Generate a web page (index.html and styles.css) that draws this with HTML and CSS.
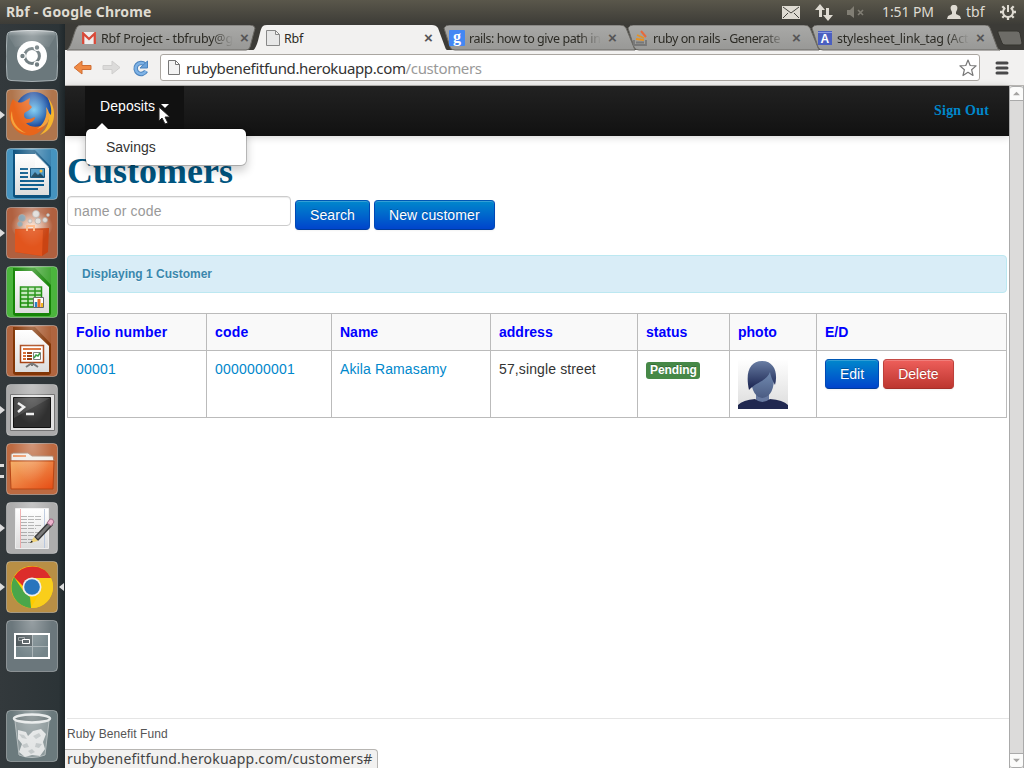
FILE: index.html
```html
<!DOCTYPE html>
<html lang="en">
<head>
<meta charset="utf-8">
<title>Rbf</title>
<link rel="stylesheet" href="styles.css">
</head>
<body>
<svg class="defs" width="0" height="0">
  <defs>
    <linearGradient id="gloss" x1="0" y1="0" x2="0" y2="1"><stop offset="0" stop-color="#fff" stop-opacity=".45"/><stop offset=".35" stop-color="#fff" stop-opacity=".08"/><stop offset="1" stop-color="#fff" stop-opacity=".06"/></linearGradient>
    <linearGradient id="tabg" x1="0" y1="0" x2="0" y2="1"><stop offset="0" stop-color="#a9a9a7"/><stop offset="1" stop-color="#989896"/></linearGradient>
    <linearGradient id="paper" x1="0" y1="0" x2="0" y2="1"><stop offset="0" stop-color="#fff"/><stop offset="1" stop-color="#dcdcdc"/></linearGradient>
    <linearGradient id="orange" x1="0" y1="0" x2="1" y2="1"><stop offset="0" stop-color="#f5b26b"/><stop offset="1" stop-color="#e64b13"/></linearGradient>
    <radialGradient id="globe"><stop offset="0" stop-color="#6fc7f2"/><stop offset="1" stop-color="#133f96"/></radialGradient>
    <radialGradient id="burst" cx=".5" cy=".55" r=".5"><stop offset="0" stop-color="#ffe9da"/><stop offset="1" stop-color="#ffe9da" stop-opacity="0"/></radialGradient>
    <linearGradient id="face" x1="0" y1="0" x2="0" y2="1"><stop offset="0" stop-color="#7c97bd"/><stop offset="1" stop-color="#4b5c83"/></linearGradient>
    <linearGradient id="hair" x1="0" y1="0" x2="0" y2="1"><stop offset="0" stop-color="#687da3"/><stop offset="1" stop-color="#17204d"/></linearGradient>
  </defs>
</svg>
<header class="panel">
  <span class="panel-title">Rbf - Google Chrome</span>
  <div class="indicators">
    <svg class="mail" width="18" height="13" viewBox="0 0 18 13"><path fill="#dfdbd2" d="M0 0h18v13H0z"/><path fill="none" stroke="#45443f" d="m1 1 8 6 8-6M1 12l5-5m11 5-5-5"/></svg>
    <svg class="net" width="18" height="17" viewBox="0 0 18 17"><path fill="#dfdbd2" d="m5 0 5 6H7v7H4V6H0zm8 17-5-6h3V4h3v7h4z"/></svg>
    <svg class="vol" width="18" height="13" viewBox="0 0 18 13"><path fill="#817e74" d="M0 4h3l4-4v12L3 9H0z"/><path stroke="#817e74" stroke-width="1.600" d="m11 4 5 5m0-5-5 5"/></svg>
    <span class="clock">1:51 PM</span>
    <svg class="person" width="14" height="14" viewBox="0 0 14 14"><path fill="#dfdbd2" d="M7 0c3 0 4 2 3 5L9 7v2l4 2 1 3H0l1-3 4-2V7L4 5C3 2 4 0 7 0z"/></svg>
    <span class="user">tbf</span>
    <svg class="gear" width="16" height="16" viewBox="0 0 16 16"><g fill="none" stroke="#dfdbd2"><path stroke-width="2" d="M5.300 3.800a5 5 0 1 0 5.400 0M8 1v7"/><path stroke-width="2.300" d="M0 8h3m10 0h3M8 13v3M2.300 2.300l2 2m9.400-2-2 2M2.300 13.700l2-2m9.400 2-2-2"/></g></svg>
  </div>
</header>
<div class="desktop">
<nav class="launcher">
  <div class="app"><svg width="52" height="52" viewBox="0 0 52 52"><path fill="#6b787c" stroke="#a9b2b5" d="M5 1.500Q26-1 47 1.500q4 .5 4 4 2 21 0 41 0 4-4 4-21 2-42 0-4 0-4-4-2-20 0-41 0-3.500 4-4z"/><path fill="url(#gloss)" d="M5 1q21-2 42 0l3 4-7 12q-18-4-34 0L2 5z"/><circle cx="26" cy="26" r="15" fill="#fff"/><circle cx="26" cy="26" r="7.400" fill="none" stroke="#6b787c" stroke-width="3"/><g fill="#6b787c" stroke="#fff" stroke-width="1.200"><circle cx="16.500" cy="26" r="2.800"/><circle cx="31" cy="17.500" r="2.800"/><circle cx="31" cy="34.500" r="2.800"/></g></svg></div>
  <div class="app run"><svg width="52" height="52" viewBox="0 0 52 52"><rect class="tile" x=".5" y=".5" width="51" height="51" rx="4" fill="#b0754c"/><circle cx="28" cy="21" r="18" fill="url(#globe)"/><path fill="#f6b52d" d="M42 9c10 12 8 31-8 37 8-7 10-14 8-23l3 3c1-6-1-12-3-17z"/><path fill="#e8651b" d="M7 10c4 4 7 4 10 3l7-4-1 6 3 3c-3 5-8 4-8 8 0 5 5 5 11 2 0 5-6 6-9 6 6 6 15 4 20 0-4 10-13 14-21 12C5 43-1 24 7 10z"/><path fill="#f5a33c" d="M6 22c0 12 6 18 14 22C9 42 2 32 6 22zM40 18c2 10-3 18-9 22 14-4 15-14 9-22z"/></svg></div>
  <div class="app"><svg width="52" height="52" viewBox="0 0 52 52"><rect class="tile" x=".5" y=".5" width="51" height="51" rx="4" fill="#4593bf"/><path fill="#0c517e" d="M7 2h38v45q0 3-3 3H10q-3 0-3-3z"/><path fill="#3a81ad" d="M29 2h16v17z"/><path fill="url(#paper)" d="M9 6h20l14 14v27H9z"/><path fill="#fff" d="M29 5v14h14z" opacity=".6"/><path stroke="#0c5c8d" stroke-width="2" d="M14 21h8m-8 4h8m-8 4h8m-8 4h24m-24 4h24m-24 4h18"/><path fill="#4593c2" stroke="#084b75" d="M24.500 20.500h14v9h-14z"/><path fill="#153f56" d="m25 29 4-5 3 3 2-2 4 4z"/><circle cx="35" cy="23" r="1.500" fill="#f7ba2d"/></svg></div>
  <div class="app run"><svg width="52" height="52" viewBox="0 0 52 52"><rect class="tile" x=".5" y=".5" width="51" height="51" rx="4" fill="#b0603f"/><ellipse cx="26" cy="18" rx="21" ry="16" fill="url(#burst)"/><g fill="#ddd9d5" stroke="#a7a09b" stroke-width=".7"><circle cx="16" cy="11" r="3.500" fill="#7e9bab"/><circle cx="30" cy="7" r="3.500"/><circle cx="39" cy="13" r="2.500"/><circle cx="24" cy="14" r="2"/><circle cx="32" cy="14" r="3"/><circle cx="14" cy="17" r="2.500" fill="#8ba3ae"/><circle cx="42" cy="8" r="1.500"/></g><path fill="#c94413" d="m9 22 34-1-1 24-6 4-27-4z"/><path fill="#e2551d" d="m9 22 28 1-1 26-27-4z"/><path fill="none" stroke="#ffb079" stroke-width="2" d="M21 24v-5h7v5"/></svg></div>
  <div class="app"><svg width="52" height="52" viewBox="0 0 52 52"><rect class="tile" x=".5" y=".5" width="51" height="51" rx="4" fill="#4bb53d"/><path fill="#168407" d="M7 2h38v45q0 3-3 3H10q-3 0-3-3z"/><path fill="#43a535" d="M29 2h16v17z"/><path fill="url(#paper)" d="M9 5h17l17 16v26H9z"/><path fill="#bfe6b7" stroke="#188c08" stroke-width="1.500" d="M14.500 21h21v20h-21zM22 21v20m7-20v20m-14-16h21m-21 4h21m-21 4h21m-21 4h21"/><path fill="#fff" stroke="#666" d="M27.500 31.500h10v10h-10z"/><path stroke="#2581c5" stroke-width="2.500" d="M30 36v5"/><path stroke="#e46c25" stroke-width="3" d="M33 33v8"/><path stroke="#f1b720" stroke-width="2" d="M36 37v4"/></svg></div>
  <div class="app"><svg width="52" height="52" viewBox="0 0 52 52"><rect class="tile" x=".5" y=".5" width="51" height="51" rx="4" fill="#b0653f"/><path fill="#823607" d="M7 2h38v45q0 3-3 3H10q-3 0-3-3z"/><path fill="#a95d34" d="M29 2h16v17z"/><path fill="url(#paper)" d="M9 5h17l17 16v26H9z"/><path fill="#fff" stroke="#a84415" stroke-width="1.500" d="M14.500 20.500h23v17h-23z"/><path stroke="#d8682d" stroke-width="2" d="M17 24h18M17 28h3m-3 3h3m-3 3h3"/><path stroke="#943505" stroke-width="2" d="M21 28h5m-5 3h5m-5 3h5"/><path fill="#fff" stroke="#777" d="M27.500 27.500h7v7h-7z"/><path fill="none" stroke="#2f983b" stroke-width="1.500" d="m28 33 2-3 2 1 2-3"/><path fill="none" stroke="#777" stroke-width="2" d="m26 38-6 4m6-4 6 4m-6-4v3"/></svg></div>
  <div class="app run"><svg width="52" height="52" viewBox="0 0 52 52"><rect class="tile" x=".5" y=".5" width="51" height="51" rx="4" fill="#aaa"/><path fill="#e2e2e2" stroke="#747474" d="M4.500 10.500h44v36h-44z"/><path fill="#303030" stroke="#111" d="M7.500 13.500h37v30h-37z"/><path fill="#555" opacity=".6" d="M8 14h36L8 34z"/><path fill="none" stroke="#eee" stroke-width="2.500" d="m12 19 6 4-6 5m8 2h8"/></svg></div>
  <div class="app run double"><svg width="52" height="52" viewBox="0 0 52 52"><rect class="tile" x=".5" y=".5" width="51" height="51" rx="4" fill="#bd6a41"/><path fill="#f2eee9" stroke="#a7806b" d="M5 18v-7l2-1h15l4 3h21l1 5z"/><path stroke="#ed9867" stroke-width="2" d="M7 13h13"/><path fill="url(#orange)" stroke="#b84615" d="M4 18h44l-1 28H5z"/></svg></div>
  <div class="app run"><svg width="52" height="52" viewBox="0 0 52 52"><rect class="tile" x=".5" y=".5" width="51" height="51" rx="4" fill="#adadad"/><path fill="url(#paper)" stroke="#eee" d="M9.500 6.500h33v40h-33z"/><path stroke="#eaa" d="M14.500 7v39"/><path stroke="#b9c7dd" d="M38.500 7v39"/><path fill="none" stroke="#aaa" stroke-width="1" stroke-dasharray="6 1" d="M15 14.500h21m-21 3h21m-21 3h13m-13 3h21m-21 3h15m-15 4h21m-21 3h18m-18 4h16m-16 3h11"/><path fill="#333" d="M28 35 43 19l4 4-15 16z"/><path fill="#777" d="m30 35 14-15 2 2-14 15z"/><path fill="#edb4cd" stroke="#9a6681" d="m41 21 3-4q3-1 4 3l-3 4z"/><path fill="#eed279" d="m28 35 4 4-8 2z"/><path fill="#222" d="m24 41 1.500-2.500 1.500 1.500z"/></svg></div>
  <div class="app run active"><svg width="52" height="52" viewBox="0 0 52 52"><rect class="tile" x=".5" y=".5" width="51" height="51" rx="4" fill="#b98f45"/><circle cx="26" cy="26" r="21" fill="#fc0"/><path fill="#dc2d2b" d="M8 16a21 21 0 0 1 37 1H26l-9 8z"/><path fill="#49a64a" d="M8 16 18 31l6 5 1 11A21 21 0 0 1 8 16z"/><path fill="#f9ce1b" d="M26 17h19a21 21 0 0 1-20 30l9-16z"/><circle cx="26" cy="26" r="9.500" fill="#eee"/><circle cx="26" cy="26" r="7.800" fill="#2875bd"/></svg></div>
  <div class="app"><svg width="52" height="52" viewBox="0 0 52 52"><rect class="tile" x=".5" y=".5" width="51" height="51" rx="4" fill="#6b777c"/><path fill="#75858a" stroke="#fff" stroke-width="2" d="M9 14h34v24H9z"/><path fill="#4d575b" d="M10 15h16v11H10z"/><path stroke="#a5afb2" d="M26.500 15v22M10 26.500h32"/><path fill="none" stroke="#9ba1a3" d="M12.500 17.500h6v3h-6z"/><path fill="#4d575b" stroke="#fff" d="M16.500 19.500h7v4h-7z"/></svg></div>
  <div class="app trash"><svg width="52" height="52" viewBox="0 0 52 52"><rect class="tile" x=".5" y=".5" width="51" height="51" rx="4" fill="#6b7a7d"/><path fill="#8e9a9c" stroke="#b5bdbe" d="m9 11 4 34q13 5 26 0l4-34z"/><path fill="#e3e5e5" d="m12 20 8 2 2 4 5-5 8-2 5 5-3 8 2 7-5 7-8-1-7 2-6-5 3-8-4-5z"/><path fill="#c3c8c9" d="m13 24 5 1 3 4-5-1zm14 2 6-3 2 3-5 3zm-11 9 5-2 2 4-5 1zm14-2 6 1-3 4-4-1zm-8 8 4-2 3 3-4 2z"/><ellipse cx="26" cy="8.500" rx="18" ry="4" fill="#6d797b" stroke="#e6e9e9" stroke-width="2.500"/></svg></div>
</nav>
<main class="browser">
  <div class="tabs">
    <div class="tab t1"><svg class="shape" width="194" height="26" viewBox="0 0 194 26"><path d="M1 25C6 22 8 4 12 1q1-1 4-1h168q4 0 5 3l-5 19q-1 3-4 3z"/></svg><svg class="fav" width="14" height="12" viewBox="0 0 14 12"><path fill="#eee" d="M0 0h14v12H0z"/><path fill="none" stroke="#d84938" stroke-width="2.300" d="M1.200 12V1.500L7 7l5.800-5.500V12"/></svg><span class="label">Rbf Project - tbfruby@g</span><i class="x">×</i></div>
    <div class="tab t3"><svg class="shape" width="194" height="26" viewBox="0 0 194 26"><path d="M2 3q2-3 5-3h171q4 0 6 3l9 22H13q-4 0-5-3z"/></svg><svg class="fav" width="16" height="16" viewBox="0 0 16 16"><rect width="16" height="16" rx="1" fill="#4387f4"/><text x="4" y="12" fill="#fff" font-family="Liberation Serif" font-weight="bold" font-size="16">g</text></svg><span class="label">rails: how to give path in</span><i class="x">×</i></div>
    <div class="tab t4"><svg class="shape" width="194" height="26" viewBox="0 0 194 26"><path d="M2 3q2-3 5-3h171q4 0 6 3l9 22H13q-4 0-5-3z"/></svg><svg class="fav" width="16" height="16" viewBox="0 0 16 16"><path fill="none" stroke="#777" stroke-width="1.800" d="M1 10v5h12v-5M3 12.500h8"/><path stroke="#e59224" stroke-width="1.800" d="m3 9 8 1M4 5l7 3"/><path stroke="#e76a3c" stroke-width="2" d="m8 1 5 6"/></svg><span class="label">ruby on rails - Generate</span><i class="x">×</i></div>
    <div class="tab t5"><svg class="shape" width="190" height="26" viewBox="0 0 190 26"><path d="M2 3q2-3 5-3h168q4 0 5 3l7 19q1 3 3 3H13q-4 0-5-3z"/></svg><svg class="fav" width="14" height="14" viewBox="0 0 14 14"><path fill="#4b5fc0" d="M0 0h14v14H0z"/><path stroke="#8998df" d="M0 1.500h14"/><text x="2.500" y="12" fill="#fff" font-family="Liberation Sans" font-weight="bold" font-size="12">A</text></svg><span class="label">stylesheet_link_tag (Act</span><i class="x">×</i></div>
    <div class="tab t2"><svg class="shape" width="198" height="26" viewBox="0 0 198 26"><path d="M0 26C7 23 7 4 11 1q1-1 4-1h165q4 0 6 3l7 19q1 4 5 4z"/></svg><svg class="fav" width="14" height="16" viewBox="0 0 14 16"><path fill="#e7e7e7" stroke="#888" d="M.500.500h9l4 4v11H.500zm9 0v4h4"/></svg><span class="label">Rbf</span><i class="x">×</i></div>
    <svg class="newtab" width="26" height="16" viewBox="0 0 26 16"><path fill="#6d6c67" stroke="#35342f" d="M1 1h19q2 0 3 2l2 10q0 2-2 2H8q-2 0-3-2L1 3z"/></svg>
  </div>
  <div class="toolbar">
    <svg class="nav" width="80" height="20" viewBox="0 0 80 20"><path fill="#f08a44" stroke="#cf6d33" stroke-linejoin="round" d="m1 9.500 8-6.500v4.500h9v4H9V16z"/><path fill="#dcdbda" stroke="#cfcecd" stroke-linejoin="round" d="m47 9.500-8-6.500v4.500h-9v4h9V16z"/><path fill="none" stroke="#4c83bd" stroke-width="4.500" d="M72 6.500A5.500 5.500 0 1 0 73 13"/><path fill="none" stroke="#7eb2e5" stroke-width="2.500" d="M72 6.500A5.500 5.500 0 1 0 73 13"/><path fill="#6ba2da" stroke="#4c83bd" d="M74.500 3v7H67z"/></svg>
    <div class="url"><svg width="12" height="15" viewBox="0 0 12 15"><path fill="#f3f3f3" stroke="#777" d="M.500.500h7l4 4v10H.500zm7 0v4h4"/></svg><span class="address">rubybenefitfund.herokuapp.com<em>/customers</em></span><svg class="star" width="18" height="18" viewBox="0 0 18 18"><path fill="#fff" stroke="#777" stroke-width="1.200" stroke-linejoin="round" d="m9 1 2.200 5.500 5.900.4-4.500 3.800 1.400 5.800-5-3.200-5 3.200 1.400-5.800L.9 6.900l5.900-.4z"/></svg></div>
    <svg width="14" height="14" viewBox="0 0 14 14"><path stroke="#484849" stroke-width="3" stroke-linecap="round" d="M2 2h10M2 7h10M2 12h10"/></svg>
  </div>
  <div class="viewport">
    <div class="page">
      <div class="navbar"><div class="dropdown"><a class="toggle">Deposits<b class="caret"></b></a><div class="menu"><a>Savings</a></div></div><a class="signout">Sign Out</a></div>
      <div class="content">
        <h1>Customers</h1>
        <form class="search"><input type="text" placeholder="name or code"><button type="button" class="btn primary find">Search</button><a class="btn primary create">New customer</a></form>
        <div class="alert">Displaying 1 Customer</div>
        <table>
          <colgroup><col class="c1"><col class="c2"><col class="c3"><col class="c4"><col class="c5"><col class="c6"><col class="c7"></colgroup>
          <thead><tr><th>Folio number</th><th>code</th><th>Name</th><th>address</th><th>status</th><th>photo</th><th>E/D</th></tr></thead>
          <tbody><tr><td><a>00001</a></td><td><a>0000000001</a></td><td><a>Akila Ramasamy</a></td><td>57,single street</td><td><span class="badge">Pending</span></td>
          <td><svg class="avatar" width="50" height="50" viewBox="0 0 50 50"><path fill="url(#paper)" d="M0 0h50v50H0z"/><path fill="#6779a0" d="M18 33h13v10H18z"/><path fill="#202850" d="M0 50v-4q5-5 17-6 7 6 15 0 13 1 18 6v4z"/><path fill="url(#face)" d="M13 21q0-14 11-15 12 2 12 15-1 17-12 18-10-2-11-18z"/><path fill="url(#hair)" d="M11 31C7 13 12 2 24 2c13 0 16 13 13 24-1-2-4-7-5-13-3 9-14 10-21 18z"/></svg></td>
          <td><div class="actions"><a class="btn primary">Edit</a><a class="btn danger">Delete</a></div></td></tr></tbody>
        </table>
      </div>
      <footer>Ruby Benefit Fund</footer>
    </div>
    <div class="scrollbar"><svg width="13" height="15" viewBox="0 0 13 15"><path fill="#a5a4a2" d="m2.500 9.500 4-4 4 4z"/></svg><div class="thumb"></div><svg width="13" height="15" viewBox="0 0 13 15"><path fill="#a5a4a2" d="m2.500 5.500 4 4 4-4z"/></svg></div>
    <div class="statusbar">rubybenefitfund.herokuapp.com/customers#</div>
  </div>
</main>
</div>
<svg class="cursor" width="13" height="20" viewBox="0 0 13 20"><path fill="#fff" stroke="#222" d="M1 1v14l3-3 3 6 3-1-3-6h5z"/></svg>
</body>
</html>
```

FILE: styles.css
```css
* { box-sizing: border-box; }
body { margin: 0; width: 1024px; height: 768px; overflow: hidden; position: relative; font: 14px/20px "Liberation Sans", Arial, sans-serif; color: #333; background: #fff; }
.defs { position: absolute; }
.panel { height: 24px; display: flex; align-items: center; justify-content: space-between; padding: 0 8px 0 6px; background: linear-gradient(#5a574b, #3d3c37); color: #dfdbd2; font: 14px/24px "Noto Sans", sans-serif; }
.panel-title { font-weight: bold; font-size: 14px; letter-spacing: .15px; }
.indicators { display: flex; align-items: center; height: 24px; }
.mail { margin-right: 1px; }
.net { margin-left: 14px; }
.vol { margin-left: 14px; }
.clock { width: 53px; margin-left: 17px; letter-spacing: -.1px; white-space: nowrap; }
.person { margin-left: 12px; }
.user { width: 21px; margin-left: 5px; }
.gear { margin-left: 13px; }
.desktop { display: flex; height: 744px; }
.launcher { width: 65px; padding: 6px 7px 6px 6px; display: flex; flex-direction: column; gap: 7px; background: linear-gradient(90deg, #33393c, #2c3437 90%, #20282b); }
.app { width: 52px; height: 52px; position: relative; flex: none; }
.app svg { display: block; }
.tile { stroke: #fff; stroke-opacity: .35; }
.app::before { content: ""; position: absolute; inset: 0; border-radius: 4px; background: radial-gradient(ellipse at 50% 0, rgba(255,255,255,.3), transparent 55%); }
.run::after { content: ""; position: absolute; left: -6px; top: 22px; border: solid transparent; border-width: 4px 0 4px 5px; border-left-color: #ddd; }
.double::after { height: 8px; width: 4px; top: 21px; border: 0; border-top: 3px solid #ddd; border-bottom: 3px solid #ddd; }
.launcher .active::before { inset: 22px auto auto 53px; border-radius: 0; border: solid transparent; border-width: 4px 5px 4px 0; border-right-color: #ddd; background: none; }
.trash { margin-top: auto; }
.browser { flex: 1; min-width: 0; display: flex; flex-direction: column; }
.tabs { height: 26px; position: relative; background: #3c3b37; font: 12.5px/26px "Noto Sans", sans-serif; }
.tab { position: absolute; top: 1px; width: 194px; height: 26px; display: flex; align-items: center; color: #2c2b25; }
.shape { position: absolute; inset: 0; }
.shape path { fill: url(#tabg); stroke: #6b6964; stroke-width: 1; }
.fav { position: relative; flex: none; }
.label { position: relative; height: 25px; overflow: hidden; white-space: nowrap; margin-left: 5px; width: 132px; flex: none; letter-spacing: -.2px; mask-image: linear-gradient(90deg, #000 84%, transparent); }
.x { position: relative; font: bold 15px/24px "Liberation Sans", sans-serif; color: #555; margin-left: 7px; }
.t1 { left: 1px; padding-left: 16px; }
.t2 { left: 187px; width: 198px; padding-left: 14px; z-index: 2; }
.t2 .shape path { fill: #f2f1f0; stroke: none; }
.t2 .label { width: 131px; margin-left: 4px; mask-image: none; }
.t2 .x { margin-left: 9px; }
.t3 { left: 377px; padding-left: 7px; }
.t4 { left: 561px; padding-left: 7px; }
.t5 { left: 745px; padding-left: 8px; }
.t3 .label { margin-left: 4px; letter-spacing: -.45px; }
.t4 .label { margin-left: 4px; letter-spacing: -.45px; }
.newtab { position: absolute; left: 932px; top: 6px; }
.toolbar { height: 36px; flex: none; display: flex; align-items: center; background: #f2f1f0; border-bottom: 1px solid #b7b5b2; padding: 1px 15px 1px 8px; justify-content: space-between; }
.url { width: 820px; height: 27px; margin-right: 8px; background: #fff; border: 1px solid #aaa6a1; border-radius: 3px; display: flex; align-items: center; padding: 0 2px 0 7px; color: #333; font: 15px/24px "Noto Sans", sans-serif; }
.address { margin-left: 6px; letter-spacing: -.36px; }
.address em { font-style: normal; color: #999; }
.star { margin-left: auto; }
.viewport { height: 682px; display: flex; position: relative; }
.page { width: 944px; display: flex; flex-direction: column; }
.navbar { height: 50px; display: flex; padding: 0 20px 0 20px; justify-content: space-between; background: linear-gradient(#222, #111); box-shadow: 0 1px 8px rgba(0,0,0,.18); }
.dropdown { position: relative; width: 99px; background: #111; }
.toggle { display: flex; align-items: center; height: 40px; padding-left: 15px; color: #fff; letter-spacing: .08px; }
.caret { margin-left: 6px; border: 4px solid transparent; border-top-color: #fff; border-bottom: 0; }
.menu { position: absolute; top: 42px; left: 0; width: 162px; height: 38px; padding: 8px 20px; background: #fff; border: 1px solid rgba(0,0,0,.2); border-radius: 6px; box-shadow: 0 5px 10px rgba(0,0,0,.2); background-clip: padding-box; z-index: 4; }
.menu::before { content: ""; position: absolute; left: 10px; top: -6px; border: 6px solid transparent; border-bottom-color: #fff; border-top: 0; }
.signout { font: bold 14px/50px "Liberation Serif", serif; color: #08c; letter-spacing: .2px; }
.content { padding: 15px 2px 0; }
h1 { margin: 0; color: #005580; font: bold 36px/40px "Liberation Serif", serif; }
.search { display: flex; align-items: flex-start; gap: 4px; margin: 5px 0 25px; height: 34px; }
.search .btn { margin-top: 4px; letter-spacing: .1px; }
.find { width: 75px; }
.create { width: 121px; }
input { width: 224px; height: 30px; padding: 4px 6px; border: 1px solid #ccc; border-radius: 4px; box-shadow: inset 0 1px 1px rgba(0,0,0,.075); font: 14px/20px "Liberation Sans", sans-serif; letter-spacing: .17px; }
input::placeholder { color: #999; }
.btn { display: inline-block; height: 30px; padding: 4px 14px; border: 1px solid; border-radius: 4px; color: #fff; font: 14px/20px "Liberation Sans", sans-serif; text-shadow: 0 -1px 0 rgba(0,0,0,.25); box-shadow: inset 0 1px 0 rgba(255,255,255,.2), 0 1px 2px rgba(0,0,0,.05); white-space: nowrap; }
.primary { background: linear-gradient(#08c, #04c); border-color: #0058b5 #0048b5 #003b9b; }
.danger { background: linear-gradient(#ee5f5b, #bd362f); border-color: #c54a46 #bd403a #a52f29; }
.alert { height: 38px; padding: 8px 14px; background: #d9edf7; border: 1px solid #bce8f1; border-radius: 4px; color: #3a87ad; font-size: 12px; font-weight: bold; text-shadow: 0 1px 0 rgba(255,255,255,.5); margin-bottom: 20px; }
table { width: 940px; table-layout: fixed; border-collapse: collapse; }
th, td { padding: 8px; border: 1px solid #bbb; text-align: left; vertical-align: top; white-space: nowrap; }
th { color: #00f; background: #f9f9f9; height: 37px; letter-spacing: .23px; }
th:nth-child(n+3) { letter-spacing: 0; }
td { height: 67px; letter-spacing: .12px; }
td > a { color: #08c; }
td:nth-child(-n+2) { letter-spacing: .21px; }
td .btn { letter-spacing: 0; }
.c1 { width: 139px; } .c2 { width: 125px; } .c3 { width: 159px; } .c4 { width: 147px; } .c5 { width: 92px; } .c6 { width: 87px; }
.badge { display: inline-block; width: 54px; background: #468847; border-radius: 3px; padding: 1px 4px 2px; color: #fff; font-size: 12px; line-height: 14px; font-weight: bold; letter-spacing: -.1px; text-shadow: 0 -1px 0 rgba(0,0,0,.25); }
.avatar { display: block; }
.actions { display: flex; gap: 4px; }
footer { margin: auto 0 24px 2px; border-top: 1px solid #e5e5e5; padding-top: 5px; font-size: 12px; color: #555; letter-spacing: .08px; }
.scrollbar { width: 15px; background: #dcdbda; border: solid #aaa; border-width: 0 1px; display: flex; flex-direction: column; }
.scrollbar svg { background: #fbfbfa; border: solid #aaa; border-width: 1px 0; border-radius: 3px 3px 0 0; width: 13px; height: 15px; }
.scrollbar svg:last-child { border-radius: 0 0 3px 3px; }
.thumb { flex: 1; background: #dcdbda; }
.statusbar { position: absolute; left: 0; bottom: 0; width: 313px; height: 19px; border: 1px solid #b7b5b2; border-width: 1px 1px 0 0; border-radius: 0 4px 0 0; background: #f2f1f0; padding-left: 2px; color: #444; font: 14px/18px "Noto Sans", sans-serif; letter-spacing: .19px; white-space: nowrap; }
.cursor { position: absolute; left: 158px; top: 106px; z-index: 5; }
```
